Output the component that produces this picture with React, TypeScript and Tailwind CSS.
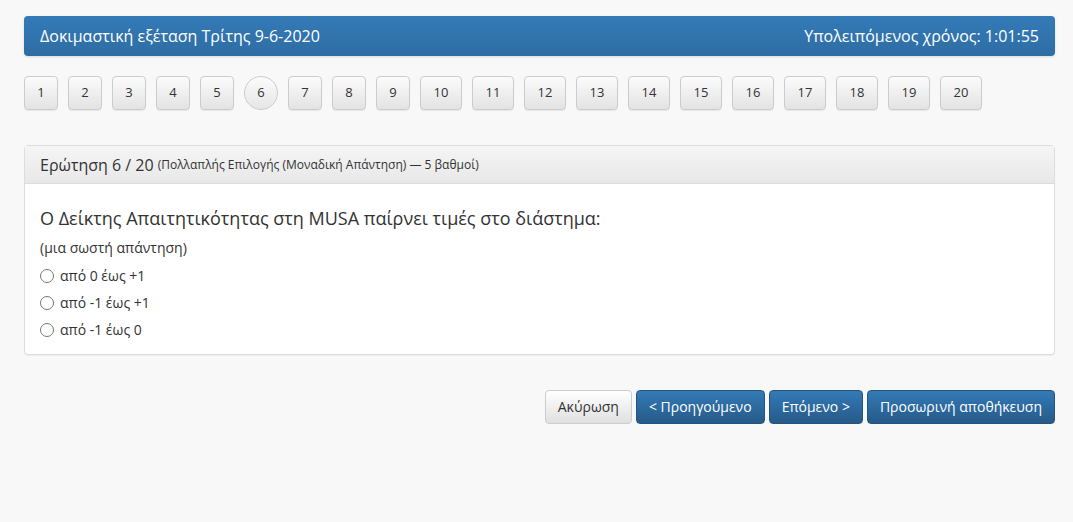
const questions = Array.from({ length: 20 }, (_, i) => i + 1);

const options = ["από 0 έως +1", "από -1 έως +1", "από -1 έως 0"];

export default function App() {
  return (
    <div className="min-h-[522px] bg-[#f8f8f8] pl-6 pr-[18px] pt-4 font-['Open_Sans',sans-serif] text-[#333]">
      {/* Exam title bar */}
      <div className="flex h-10 items-center justify-between rounded bg-gradient-to-b from-[#337ab7] to-[#2e6da4] px-4 text-base text-white shadow-sm">
        <span>Δοκιμαστική εξέταση Τρίτης 9-6-2020</span>
        <span>Υπολειπόμενος χρόνος: 1:01:55</span>
      </div>

      {/* Question navigation */}
      <div className="mt-5 flex gap-[10px]">
        {questions.map((n) =>
          n === 6 ? (
            <span
              key={n}
              className="flex h-[34px] w-[34px] items-center justify-center rounded-full border border-[#ccc] bg-gradient-to-b from-[#fbfbfb] to-[#e6e6e6] text-[13px] text-[#333]"
            >
              {n}
            </span>
          ) : (
            <span
              key={n}
              className={`flex h-[34px] items-center justify-center rounded border border-[#ccc] bg-gradient-to-b from-[#fbfbfb] to-[#e3e3e3] text-[13px] text-[#333] shadow-[inset_0_1px_0_rgba(255,255,255,.15),0_1px_1px_rgba(0,0,0,.075)] ${
                n < 10 ? "w-[34px]" : "w-[42px]"
              }`}
            >
              {n}
            </span>
          )
        )}
      </div>

      {/* Question panel */}
      <div className="mt-[35px] rounded border border-[#ddd] bg-white shadow-[0_1px_1px_rgba(0,0,0,.05)]">
        <div className="flex h-[38px] items-center border-b border-[#ddd] bg-gradient-to-b from-[#f5f5f5] to-[#e8e8e8] px-[15px]">
          <span className="text-base text-[#333]">Ερώτηση 6 / 20</span>
          <span className="ml-1 text-xs text-[#333]">
            (Πολλαπλής Επιλογής (Μοναδική Απάντηση) — 5 βαθμοί)
          </span>
        </div>
        <div className="px-[15px] pb-[14px] pt-[22px]">
          <p className="text-lg leading-6 text-[#333]">
            Ο Δείκτης Απαιτητικότητας στη MUSA παίρνει τιμές στο διάστημα:
          </p>
          <p className="mt-2 text-sm leading-5 text-[#333]">(μια σωστή απάντηση)</p>
          <div className="mt-2 flex flex-col gap-[7px]">
            {options.map((o) => (
              <label key={o} className="flex items-center gap-[6px] text-sm leading-5 text-[#333]">
                <span className="h-[14px] w-[14px] rounded-full border border-[#767676] bg-white" />
                {o}
              </label>
            ))}
          </div>
        </div>
      </div>

      {/* Actions */}
      <div className="mt-[35px] flex justify-end gap-1 text-sm">
        <button className="h-[34px] rounded border border-[#ccc] bg-gradient-to-b from-white to-[#e0e0e0] px-3 text-[#333]">
          Ακύρωση
        </button>
        <button className="h-[34px] rounded border border-[#245580] bg-gradient-to-b from-[#337ab7] to-[#265a88] px-3 text-white">
          &lt; Προηγούμενο
        </button>
        <button className="h-[34px] rounded border border-[#245580] bg-gradient-to-b from-[#337ab7] to-[#265a88] px-3 text-white">
          Επόμενο &gt;
        </button>
        <button className="h-[34px] rounded border border-[#245580] bg-gradient-to-b from-[#337ab7] to-[#265a88] px-3 text-white">
          Προσωρινή αποθήκευση
        </button>
      </div>
    </div>
  );
}
